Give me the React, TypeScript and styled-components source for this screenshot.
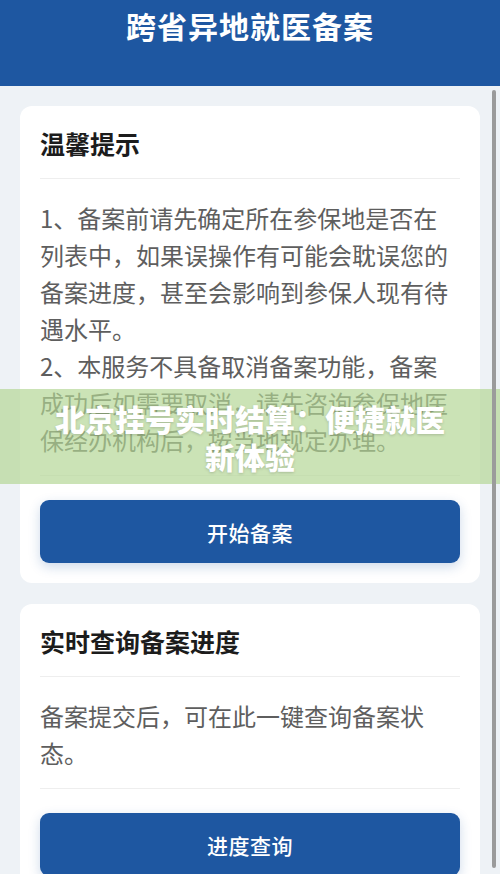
import styled, { createGlobalStyle } from "styled-components";

const GlobalStyle = createGlobalStyle`
  html, body {
    margin: 0;
    padding: 0;
    background: #eef2f6;
  }
  body {
    font-family: "Noto Sans CJK SC", "Noto Sans", sans-serif;
  }
  * {
    box-sizing: border-box;
  }
`;

const Page = styled.div`
  position: relative;
  width: 500px;
  height: 874px;
  overflow: hidden;
  background: #eef2f6;
`;

const Header = styled.header`
  height: 86px;
  background: #1e57a1;
  padding-top: 4px;
  display: flex;
  justify-content: center;
  align-items: flex-start;
`;

const HeaderTitle = styled.h1`
  margin: 0;
  color: #ffffff;
  font-size: 30px;
  line-height: 42px;
  font-weight: 700;
  letter-spacing: 1px;
`;

const Content = styled.main`
  display: flex;
  flex-direction: column;
  gap: 21px;
  padding: 20px 20px 0;
`;

const Card = styled.section`
  background: #ffffff;
  border-radius: 12px;
  padding: 0 20px 20px;
`;

const CardHead = styled.div`
  padding: 18px 0 16px;
  border-bottom: 1px solid #eeeeee;
`;

const CardTitle = styled.h2`
  margin: 0;
  font-size: 25px;
  line-height: 38px;
  font-weight: 700;
  color: #1c1c1c;
`;

const CardBody = styled.div`
  padding: 20px 6px 17px 0;
  border-bottom: 1px solid #eeeeee;
`;

const Text = styled.p`
  margin: 0;
  font-size: 24px;
  line-height: 37px;
  color: #5e5e5e;
`;

const CardFoot = styled.div`
  padding-top: 24px;
`;

const PrimaryButton = styled.button`
  display: block;
  width: 100%;
  height: 63px;
  border: none;
  border-radius: 9px;
  background: #1e57a1;
  color: #ffffff;
  font-family: inherit;
  font-size: 21px;
  font-weight: 500;
  letter-spacing: 0.5px;
  box-shadow: 0 4px 12px rgba(30, 87, 161, 0.22);
  cursor: pointer;
`;

const Banner = styled.div`
  position: absolute;
  left: 0;
  right: 0;
  top: 389px;
  height: 95px;
  background: rgba(178, 214, 148, 0.68);
  display: flex;
  align-items: center;
  justify-content: center;
  padding: 0 50px;
`;

const BannerText = styled.div`
  color: #ffffff;
  font-size: 30px;
  line-height: 38px;
  font-weight: 900;
  text-align: center;
  text-shadow: 0 1px 3px rgba(0, 0, 0, 0.18);
`;

const ScrollThumb = styled.div`
  position: absolute;
  right: 4px;
  top: 90px;
  bottom: 6px;
  width: 4px;
  border-radius: 2px;
  background: #9b9b9b;
`;

export default function App() {
  return (
    <>
      <GlobalStyle />
      <Page>
        <Header>
          <HeaderTitle>跨省异地就医备案</HeaderTitle>
        </Header>
        <Content>
          <Card>
            <CardHead>
              <CardTitle>温馨提示</CardTitle>
            </CardHead>
            <CardBody>
              <Text>
                1、备案前请先确定所在参保地是否在列表中，如果误操作有可能会耽误您的备案进度，甚至会影响到参保人现有待遇水平。
              </Text>
              <Text>
                2、本服务不具备取消备案功能，备案成功后如需要取消，请先咨询参保地医保经办机构后，按当地规定办理。
              </Text>
            </CardBody>
            <CardFoot>
              <PrimaryButton>开始备案</PrimaryButton>
            </CardFoot>
          </Card>
          <Card>
            <CardHead>
              <CardTitle>实时查询备案进度</CardTitle>
            </CardHead>
            <CardBody>
              <Text>备案提交后，可在此一键查询备案状态。</Text>
            </CardBody>
            <CardFoot>
              <PrimaryButton>进度查询</PrimaryButton>
            </CardFoot>
          </Card>
        </Content>
        <Banner>
          <BannerText>北京挂号实时结算：便捷就医新体验</BannerText>
        </Banner>
        <ScrollThumb />
      </Page>
    </>
  );
}
